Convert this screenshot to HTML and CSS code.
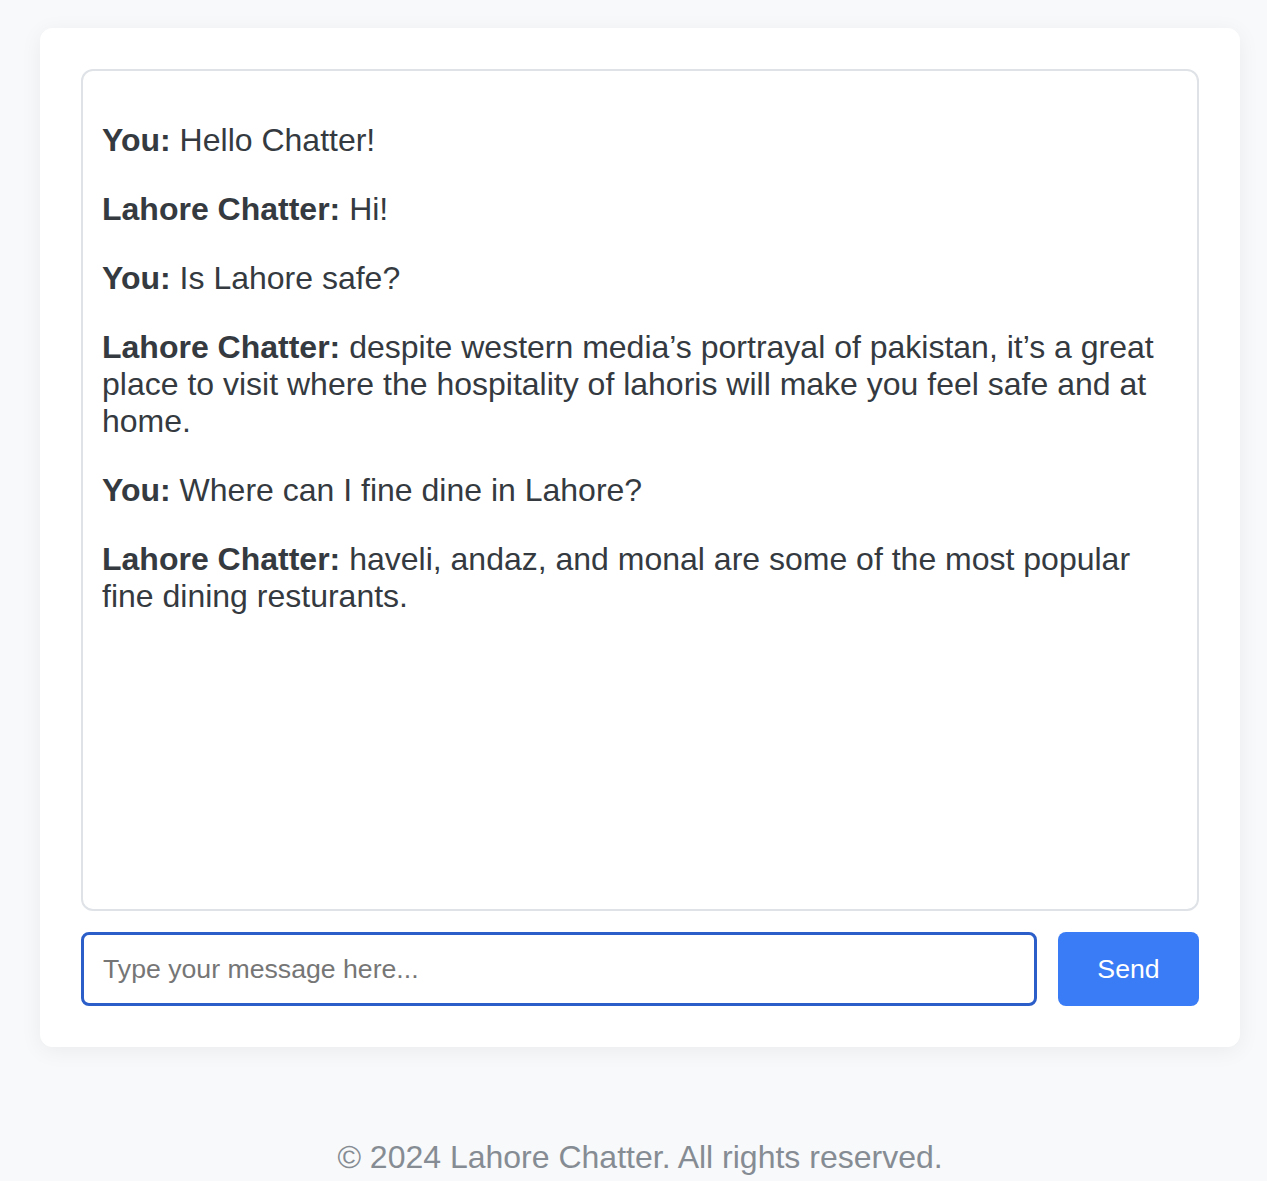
FILE: index.html
```html
<!DOCTYPE html>
<html lang="en">
<head>
<meta charset="utf-8">
<title>Lahore Chatter</title>
<link rel="stylesheet" href="styles.css">
</head>
<body>
<div class="page">
  <main class="card">
    <div class="chat-box">
      <p><strong>You:</strong> Hello Chatter!</p>
      <p><strong>Lahore Chatter:</strong> Hi!</p>
      <p><strong>You:</strong> Is Lahore safe?</p>
      <p><strong>Lahore Chatter:</strong> despite western media’s portrayal of pakistan, it’s a great place to visit where the hospitality of lahoris will make you feel safe and at home.</p>
      <p><strong>You:</strong> Where can I fine dine in Lahore?</p>
      <p><strong>Lahore Chatter:</strong> haveli, andaz, and monal are some of the most popular fine dining resturants.</p>
    </div>
    <form class="composer">
      <input class="message-input" type="text" placeholder="Type your message here...">
      <button class="send-btn" type="button">Send</button>
    </form>
  </main>
  <footer class="footer">
    <p>© 2024 Lahore Chatter. All rights reserved.</p>
  </footer>
</div>
</body>
</html>
```

FILE: styles.css
```css
* { box-sizing: border-box; }

html, body {
  margin: 0;
  padding: 0;
  background: #f8f9fa;
  font-family: "Liberation Sans", Arial, Helvetica, sans-serif;
  color: #343a40;
}

.page {
  padding: 28px 27px 0 40px;
}

.card {
  background: #ffffff;
  border: 1px solid #ffffff;
  border-radius: 12px;
  padding: 40px;
  box-shadow: 0 4px 22px rgba(0, 0, 0, 0.06);
}

.chat-box {
  height: 842px;
  border: 2px solid #dfe2e6;
  border-radius: 12px;
  padding: 19px 19px 19px 19px;
  font-size: 32px;
  overflow: hidden;
}

.chat-box p {
  margin: 32px 0;
}

.chat-box strong {
  font-weight: 700;
}

.composer {
  display: flex;
  gap: 21px;
  margin: 21px 0 0;
}

.message-input {
  flex: 1;
  height: 74px;
  border: 3px solid #2b5ec8;
  border-radius: 8px;
  padding: 0 19px;
  font-family: "Liberation Sans", Arial, Helvetica, sans-serif;
  font-size: 26.67px;
  color: #343a40;
  outline: none;
  background: #fff;
}

.message-input::placeholder {
  color: #767676;
}

.send-btn {
  width: 141px;
  height: 74px;
  border: none;
  border-radius: 8px;
  background: #3a7cf5;
  color: #ffffff;
  font-family: "Liberation Sans", Arial, Helvetica, sans-serif;
  font-size: 26.67px;
  padding: 0;
}

.footer {
  margin-top: 92px;
  text-align: center;
  font-size: 32px;
  color: #868c93;
}

.footer p {
  margin: 32px 0;
}
```
